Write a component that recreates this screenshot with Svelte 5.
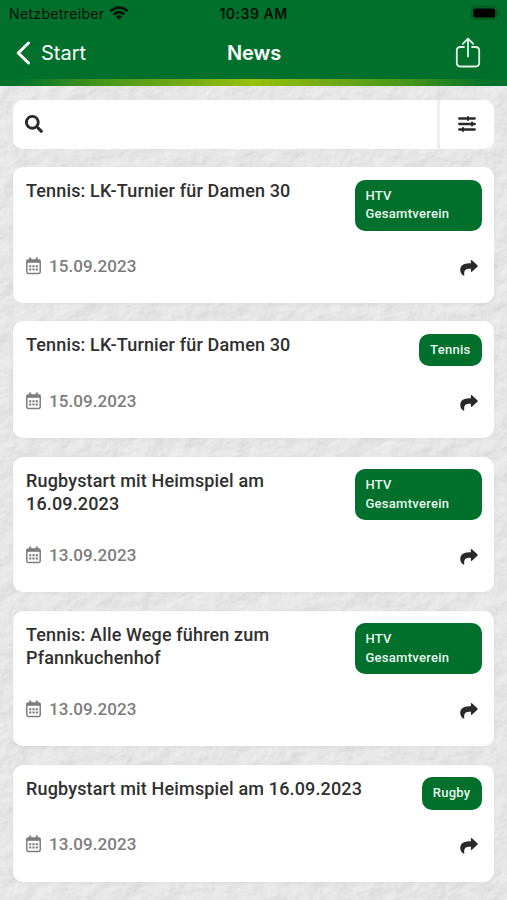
<script>
  const items = [
    { title: 'Tennis: LK-Turnier für Damen 30', tag: 'HTV Gesamtverein', date: '15.09.2023' },
    { title: 'Tennis: LK-Turnier für Damen 30', tag: 'Tennis', date: '15.09.2023' },
    { title: 'Rugbystart mit Heimspiel am 16.09.2023', tag: 'HTV Gesamtverein', date: '13.09.2023' },
    { title: 'Tennis: Alle Wege führen zum Pfannkuchenhof', tag: 'HTV Gesamtverein', date: '13.09.2023' },
    { title: 'Rugbystart mit Heimspiel am 16.09.2023', tag: 'Rugby', date: '13.09.2023' }
  ];
</script>

<div class="screen">
  <!-- plaster wall backdrop -->
  <svg class="wall" width="507" height="900" aria-hidden="true">
    <filter id="plaster" x="0" y="0" width="100%" height="100%" color-interpolation-filters="sRGB">
      <feTurbulence type="fractalNoise" baseFrequency="0.045 0.055" numOctaves="5" seed="8" result="n" />
      <feDiffuseLighting in="n" surfaceScale="0.9" diffuseConstant="1.02" lighting-color="#ededed">
        <feDistantLight azimuth="225" elevation="72" />
      </feDiffuseLighting>
      <feGaussianBlur stdDeviation="0.4" />
    </filter>
    <rect width="507" height="900" filter="url(#plaster)" />
  </svg>

  <header>
    <div class="status">
      <div class="carrier">
        <span>Netzbetreiber</span>
        <svg width="20" height="14" viewBox="0 0 20 14" fill="none" stroke="#041007" stroke-width="2.5">
          <path d="M1.5 5.2Q10-2.3 18.5 5.2M4.7 8.5Q10 3.8 15.3 8.5" />
          <path d="M7 10.6Q10 8 13 10.6L10 13.7Z" fill="#041007" stroke="none" />
        </svg>
      </div>
      <span class="time">10:39 AM</span>
      <svg class="battery" width="29" height="14" viewBox="0 0 29 14">
        <rect x=".7" y=".7" width="25" height="12.4" rx="3.8" fill="none" stroke="#04531d" stroke-width="1.2" />
        <rect x="2.3" y="2.4" width="22" height="9" rx="2" fill="#000" />
        <path d="M27 4.8Q29 7 27 9.1Z" fill="#04531d" />
      </svg>
    </div>
    <nav>
      <div class="back">
        <svg width="15" height="24" viewBox="0 0 15 24" fill="none" stroke="#fff" stroke-width="3" stroke-linecap="round" stroke-linejoin="round"><path d="M12.5 2L2.3 12 12.5 22" /></svg>
        <span>Start</span>
      </div>
      <strong>News</strong>
      <svg class="export" width="26" height="32" viewBox="0 0 26 32" fill="none" stroke="#e4f3e8" stroke-width="1.8" stroke-linecap="round" stroke-linejoin="round">
        <path d="M9 10H5.5Q1.8 10 1.8 13.7V25.8Q1.8 29.5 5.5 29.5H20.5Q24.2 29.5 24.2 25.8V13.7Q24.2 10 20.5 10H17M13 19.5V1.8M7.8 6.8L13 1.6 18.2 6.8" />
      </svg>
    </nav>
    <div class="stripe"></div>
  </header>

  <main>
    <div class="search">
      <div class="field">
        <svg width="18" height="18" viewBox="0 0 512 512" fill="#292929"><path d="M505 442.7L405.3 343c-4.5-4.5-10.6-7-17-7H372c27.6-35.3 44-79.7 44-128C416 93.1 322.9 0 208 0S0 93.1 0 208s93.1 208 208 208c48.3 0 92.7-16.4 128-44v16.3c0 6.4 2.5 12.5 7 17l99.7 99.7c9.4 9.4 24.6 9.4 33.9 0l28.3-28.3c9.4-9.4 9.4-24.6.1-34zM208 336c-70.7 0-128-57.2-128-128 0-70.7 57.2-128 128-128 70.7 0 128 57.2 128 128 0 70.7-57.2 128-128 128z" /></svg>
      </div>
      <div class="filter">
        <svg width="18" height="18" viewBox="0 0 18 18" stroke="#292929" stroke-width="2.3" stroke-linecap="round">
          <path d="M1.2 3.5H16.8M1.2 9H16.8M1.2 14.5H16.8" />
          <path d="M10 2V5M14 7.5V10.5M5 13V16" stroke-width="2" />
        </svg>
      </div>
    </div>

    {#each items as item}
      <article>
        <div class="top">
          <h2>{item.title}</h2>
          <span class="tag">{item.tag}</span>
        </div>
        <div class="bottom">
          <div class="date">
            <svg width="15" height="18" viewBox="0 0 15 18" fill="none" stroke="#7d7d7d">
              <rect x=".8" y="3" width="13.4" height="13.4" rx="1.3" stroke-width="1.5" />
              <path d="M1 4.4H14" stroke-width="2.8" />
              <path d="M4.2.6V4M10.8.6V4" stroke-width="2" />
              <path d="M3.1 9.2H11.9M3.1 12.4H11.9" stroke-width="2" stroke-dasharray="2.2 1.1" />
            </svg>
            <span>{item.date}</span>
          </div>
          <svg class="share" width="18" height="18" viewBox="0 0 18 18" fill="#292929"><path d="M10.9 1.8Q10.9.6 11.9 1.3L17.4 6.3Q18.1 7 17.4 7.7L11.9 12.7Q10.9 13.5 10.9 12.3V9.7C5.6 9.5 3.6 11.2 4.3 16.2Q4.3 17 3.5 16.5C.5 14.8-.1 11.8.4 9.4C1.4 5.4 5.4 4.3 10.9 4.3Z" /></svg>
        </div>
      </article>
    {/each}
  </main>
</div>

<style>
  :global(body) { margin: 0; overflow: hidden; }
  .screen { position: relative; width: 507px; height: 900px; overflow: hidden; background: #e5e5e5; font-family: Roboto, sans-serif; }
  .wall { position: absolute; inset: 0; }
  header { position: relative; height: 86px; box-sizing: border-box; background: #00702c; display: flex; flex-direction: column; font-family: Inter, sans-serif; }
  .status { height: 27px; display: grid; grid-template-columns: 1fr auto 1fr; align-items: center; padding: 0 7px 0 9px; color: #041007; font-size: 14px; }
  .carrier { display: flex; align-items: center; gap: 5px; letter-spacing: .35px; }
  .carrier svg { margin-top: -2px; }
  .time { font-weight: 600; font-size: 14px; letter-spacing: .5px; padding-right: 2px; }
  .battery { justify-self: end; margin-top: -1px; }
  nav { height: 52px; display: grid; grid-template-columns: 1fr auto 1fr; align-items: center; padding: 0 26px 0 16px; color: #fff; }
  .back { display: flex; align-items: center; gap: 10px; font-size: 20px; margin-top: -1px; }
  nav strong { font-size: 20px; font-weight: 600; padding-left: 11px; letter-spacing: -.1px; margin-top: -1px; }
  .export { justify-self: end; margin-top: -1px; }
  .stripe { height: 7px; background: linear-gradient(90deg, #00702c 3%, #479618 20%, #75ac14 37%, #98c00b 50%, #75ac14 63%, #479618 80%, #00702c 97%); }
  main { position: relative; display: flex; flex-direction: column; gap: 18.4px; padding: 14px 13px 0; }
  .search { height: 49px; display: flex; gap: 3px; border-radius: 10px; overflow: hidden; background: #eeeeee; }
  .field { flex: 1; display: flex; align-items: center; padding: 0 0 1px 12px; background: #fff; }
  .filter { width: 54px; display: flex; align-items: center; justify-content: center; padding-bottom: 1px; box-sizing: border-box; background: #fff; }
  article { box-sizing: border-box; padding: 12.6px 12.5px 27.4px 13px; background: #fff; border-radius: 10px; box-shadow: 0 1px 4px rgba(0, 0, 0, .04); }
  .top { display: flex; justify-content: space-between; align-items: flex-start; }
  h2 { margin: -.8px 0 0; flex: 1; max-width: 345px; font-size: 18px; line-height: 23.3px; font-weight: 500; letter-spacing: .15px; color: #303030; }
  .tag { box-sizing: border-box; flex: none; max-width: 127px; padding: 7px 11px; border-radius: 10px; background: #00702c; color: #e9f7ec; font-size: 13px; font-weight: 500; line-height: 18.5px; letter-spacing: .27px; }
  .bottom { display: flex; justify-content: space-between; align-items: center; height: 20px; margin-top: 24.6px; }
  .date { display: flex; align-items: center; gap: 8px; font-size: 17px; font-weight: 500; letter-spacing: .08px; color: #7d7d7d; }
  .share { margin: 4px 3.5px 0 0; }
</style>
